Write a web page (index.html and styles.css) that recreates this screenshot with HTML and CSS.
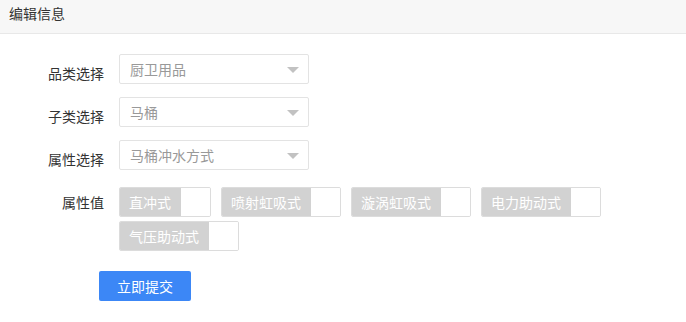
FILE: index.html
```html
<!DOCTYPE html>
<html>
<head>
    <meta charset="UTF-8">
    <title>编辑信息</title>
    <link rel="stylesheet" href="styles.css">
</head>
<body>
    <div class="header">编辑信息</div>
    <div class="form">
        <div class="form-row">
            <label class="label">品类选择</label>
            <div class="select">厨卫用品<i class="arrow"></i></div>
        </div>
        <div class="form-row">
            <label class="label">子类选择</label>
            <div class="select">马桶<i class="arrow"></i></div>
        </div>
        <div class="form-row">
            <label class="label">属性选择</label>
            <div class="select">马桶冲水方式<i class="arrow"></i></div>
        </div>
        <div class="form-row attr-row">
            <label class="label label-mid">属性值</label>
            <div class="tags">
                <span class="tag"><span class="tag-name">直冲式</span><span class="tag-box"></span></span>
                <span class="tag"><span class="tag-name">喷射虹吸式</span><span class="tag-box"></span></span>
                <span class="tag"><span class="tag-name">漩涡虹吸式</span><span class="tag-box"></span></span>
                <span class="tag"><span class="tag-name">电力助动式</span><span class="tag-box"></span></span>
                <span class="tag"><span class="tag-name">气压助动式</span><span class="tag-box"></span></span>
            </div>
        </div>
        <button class="btn">立即提交</button>
    </div>
</body>
</html>
```

FILE: styles.css
```css
body{
    margin:0;
    background:#fff;
    font-family:"Noto Sans CJK SC","Liberation Sans",sans-serif;
    font-size:14px;
    color:#333;
}
.header{
    height:34px;
    box-sizing:border-box;
    padding:3px 9px 0;
    line-height:20px;
    background:#f7f7f7;
    border-bottom:1px solid #e8e8e8;
    color:#333;
}
.form{
    padding-top:20px;
}
.form-row{
    display:flex;
    align-items:flex-start;
    margin-bottom:13px;
}
.label{
    width:104px;
    height:30px;
    margin-right:15px;
    text-align:right;
    line-height:38px;
}
.label-mid{
    line-height:30px;
}
.select{
    position:relative;
    width:190px;
    height:30px;
    box-sizing:border-box;
    border:1px solid #e3e3e3;
    border-radius:2px;
    padding-left:10px;
    line-height:28px;
    color:#999;
}
.arrow{
    position:absolute;
    right:9px;
    top:12px;
    width:0;
    height:0;
    border-left:6px solid transparent;
    border-right:6px solid transparent;
    border-top:6px solid #c2c2c2;
}
.attr-row{
    padding-top:4px;
    margin-bottom:20px;
}
.tags{
    display:flex;
    flex-wrap:wrap;
    width:500px;
    column-gap:10px;
    row-gap:4px;
}
.tag{
    display:flex;
    height:30px;
    box-sizing:border-box;
    border:1px solid #dcdcdc;
    border-radius:2px;
    overflow:hidden;
}
.tag-name{
    background:#d2d2d2;
    color:#fff;
    padding:0 10px 0 9px;
    line-height:28px;
}
.tag-box{
    width:29px;
    background:#fff;
}
.btn{
    display:block;
    margin-left:99px;
    width:92px;
    height:30px;
    border:0;
    border-radius:2px;
    background:#3c87f6;
    color:#fff;
    font-family:inherit;
    font-size:14px;
    padding:0;
}
```
